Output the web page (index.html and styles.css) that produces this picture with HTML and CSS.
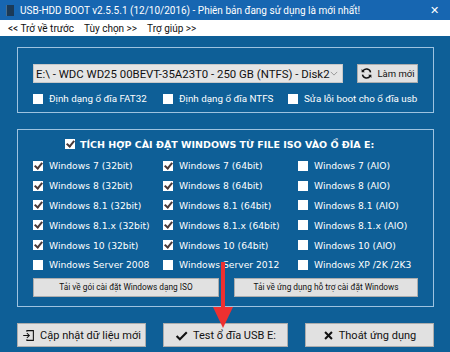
FILE: index.html
```html
<!DOCTYPE html>
<html lang="vi">
<head>
    <meta charset="UTF-8">
    <title>USB-HDD BOOT v2.5.5.1</title>
    <link rel="stylesheet" href="styles.css">
</head>
<body>
    <div class="window">
        <div class="titlebar">
            <span class="app-icon"></span>
            <span class="title">USB-HDD BOOT v2.5.5.1 (12/10/2016) - Phiên bản đang sử dụng là mới nhất!</span>
            <span class="close">✕</span>
        </div>
        <div class="menubar">
            <span>&lt;&lt; Trở về trước</span>
            <span>Tùy chọn &gt;&gt;</span>
            <span>Trợ giúp &gt;&gt;</span>
        </div>

        <div class="main">
            <div class="group drive-group">
                <div class="drive-row">
                    <div class="combo">
                        <span>E:\ - WDC WD25 00BEVT-35A23T0 - 250 GB (NTFS) - Disk2</span>
                        <svg class="chevron" viewBox="0 0 10 6"><path d="M1 1l4 4 4-4" fill="none" stroke="#888" stroke-width="1"/></svg>
                    </div>
                    <div class="btn refresh">
                        <svg viewBox="0 0 16 16" width="13" height="13">
                            <path d="M13 6.5A5.2 5.2 0 0 0 3.4 5" fill="none" stroke="#111" stroke-width="1.8"/>
                            <path d="M2 2.5v4h4z" fill="#111"/>
                            <path d="M3 9.5A5.2 5.2 0 0 0 12.6 11" fill="none" stroke="#111" stroke-width="1.8"/>
                            <path d="M14 13.5v-4h-4z" fill="#111"/>
                        </svg>
                        Làm mới
                    </div>
                </div>
                <div class="options-row">
                    <label class="check"><span class="box"></span>Định dạng ổ đĩa FAT32</label>
                    <label class="check"><span class="box"></span>Định dạng ổ đĩa NTFS</label>
                    <label class="check"><span class="box"></span>Sửa lỗi boot cho ổ đĩa usb</label>
                </div>
            </div>

            <div class="group iso-group">
                <div class="iso-head">
                    <span class="box checked"></span>TÍCH HỢP CÀI ĐẶT WINDOWS TỪ FILE ISO VÀO Ổ ĐĨA E:
                </div>
                <div class="os-grid">
                    <label class="check os"><span class="box checked"></span>Windows 7 (32bit)</label>
                    <label class="check os"><span class="box checked"></span>Windows 7 (64bit)</label>
                    <label class="check os"><span class="box"></span>Windows 7 (AIO)</label>
                    <label class="check os"><span class="box checked"></span>Windows 8 (32bit)</label>
                    <label class="check os"><span class="box checked"></span>Windows 8 (64bit)</label>
                    <label class="check os"><span class="box"></span>Windows 8 (AIO)</label>
                    <label class="check os"><span class="box checked"></span>Windows 8.1 (32bit)</label>
                    <label class="check os"><span class="box checked"></span>Windows 8.1 (64bit)</label>
                    <label class="check os"><span class="box"></span>Windows 8.1 (AIO)</label>
                    <label class="check os"><span class="box checked"></span>Windows 8.1.x (32bit)</label>
                    <label class="check os"><span class="box checked"></span>Windows 8.1.x (64bit)</label>
                    <label class="check os"><span class="box"></span>Windows 8.1.x (AIO)</label>
                    <label class="check os"><span class="box checked"></span>Windows 10 (32bit)</label>
                    <label class="check os"><span class="box checked"></span>Windows 10 (64bit)</label>
                    <label class="check os"><span class="box"></span>Windows 10 (AIO)</label>
                    <label class="check os"><span class="box"></span>Windows Server 2008</label>
                    <label class="check os"><span class="box"></span>Windows Server 2012</label>
                    <label class="check os"><span class="box"></span>Windows XP /2K /2K3</label>
                </div>
                <div class="download-row">
                    <div class="btn small">Tải về gói cài đặt Windows dạng ISO</div>
                    <div class="btn small">Tải về ứng dụng hỗ trợ cài đặt Windows</div>
                </div>
            </div>

            <div class="actions">
                <div class="btn big update">
                    <svg viewBox="0 0 16 16" width="13" height="13">
                        <path d="M6 3.5V2h8v12H6v-1.5" fill="none" stroke="#111" stroke-width="1.3"/>
                        <path d="M1.5 8h7M6 5l3 3-3 3" fill="none" stroke="#111" stroke-width="1.3"/>
                    </svg>
                    Cập nhật dữ liệu mới
                </div>
                <div class="btn big test">
                    <svg viewBox="0 0 16 16" width="13" height="13">
                        <path d="M2 8.5l4 4L14.5 4" fill="none" stroke="#111" stroke-width="2.6"/>
                    </svg>
                    Test ổ đĩa USB E:
                </div>
                <div class="btn big quit">
                    <svg viewBox="0 0 16 16" width="11" height="11">
                        <path d="M3 3l10 10M13 3L3 13" fill="none" stroke="#111" stroke-width="3"/>
                    </svg>
                    Thoát ứng dụng
                </div>
            </div>
        </div>

        <svg class="arrow" viewBox="0 0 20 66" width="20" height="66">
            <path d="M10 0v48" stroke="#ee3030" stroke-width="4"/>
            <path d="M0 45h20L10 66z" fill="#ee3030"/>
        </svg>
    </div>
</body>
</html>
```

FILE: styles.css
```css
body {
    margin: 0;
    font-family: Roboto, "Noto Sans", sans-serif;
    background: #0e5f97;
}
.window {
    position: relative;
    width: 450px;
    height: 352px;
    overflow: hidden;
    background: #0e5f97;
}
.titlebar {
    height: 20px;
    display: flex;
    align-items: center;
    background: #1766b1;
    color: white;
    font-size: 10px;
    padding: 0 8px 0 6px;
}
.app-icon {
    width: 7px;
    height: 11px;
    background: #1b3a58;
    border-left: 1px solid #4a6d8c;
    margin-right: 6px;
}
.title {
    flex: 1;
    white-space: nowrap;
}
.close {
    font-size: 11px;
    margin-right: 3px;
}
.menubar {
    height: 16px;
    display: flex;
    align-items: center;
    gap: 10px;
    background: white;
    color: #111;
    font-size: 10px;
    padding-left: 8px;
}
.main {
    padding: 11px 16px 0 17px;
}
.group {
    border: 1px solid #9ec3e0;
    box-sizing: border-box;
}
.drive-group {
    height: 66px;
    padding: 16px 15px 0 15px;
}
.drive-row {
    display: flex;
    align-items: center;
}
.combo {
    width: 310px;
    height: 19px;
    box-sizing: border-box;
    background: #e5e5e5;
    border: 1px solid #c8c8c8;
    display: flex;
    align-items: center;
    justify-content: space-between;
    padding: 0 5px 0 2px;
    font-size: 11.4px;
    color: #111;
    white-space: nowrap;
}
.chevron {
    width: 8px;
    height: 5px;
    flex: none;
}
.btn {
    background: #e1e1e1;
    border: 1px solid #adadad;
    box-sizing: border-box;
    color: #111;
    display: flex;
    align-items: center;
    justify-content: center;
    white-space: nowrap;
}
.refresh {
    margin-left: 14px;
    width: 61px;
    height: 19px;
    font-size: 9.5px;
    gap: 4px;
}
.options-row {
    display: flex;
    margin-top: 10px;
}
.check {
    display: flex;
    align-items: center;
    color: white;
    font-size: 9.8px;
    white-space: nowrap;
}
.options-row .check:nth-child(1) { width: 130px; }
.options-row .check:nth-child(2) { width: 125px; }
.box {
    width: 10px;
    height: 10px;
    background: white;
    margin-right: 6px;
    flex: none;
    position: relative;
}
.box.checked::after {
    content: "";
    position: absolute;
    left: 3px;
    top: 0;
    width: 3px;
    height: 6px;
    border: solid #4a3a3a;
    border-width: 0 2px 2px 0;
    transform: rotate(40deg);
}
.iso-group {
    margin-top: 16px;
    height: 178px;
    padding: 7px 15px 0 15px;
}
.iso-head {
    display: flex;
    align-items: center;
    color: white;
    font-family: "DejaVu Sans", sans-serif;
    font-weight: bold;
    font-size: 9.5px;
    height: 14px;
    padding-left: 32px;
}
.iso-head .box {
    margin-right: 5px;
}
.os-grid {
    display: grid;
    grid-template-columns: 130px 135px 1fr;
    grid-auto-rows: 19.8px;
    margin-top: 5px;
}
.os {
    font-family: "DejaVu Sans", sans-serif;
    font-size: 9.2px;
}
.os .box {
    margin-right: 6px;
}
.download-row {
    display: flex;
    justify-content: space-between;
    margin-top: 3px;
}
.small {
    height: 19px;
    font-size: 8.3px;
}
.download-row .small:nth-child(1) { width: 186px; }
.download-row .small:nth-child(2) { width: 184px; }
.actions {
    display: flex;
    justify-content: space-between;
    margin-top: 16px;
}
.big {
    height: 24px;
    font-size: 11px;
    gap: 5px;
}
.update { width: 129px; }
.test { width: 125px; }
.quit { width: 129px; }
.arrow {
    position: absolute;
    left: 213px;
    top: 262px;
}
```
